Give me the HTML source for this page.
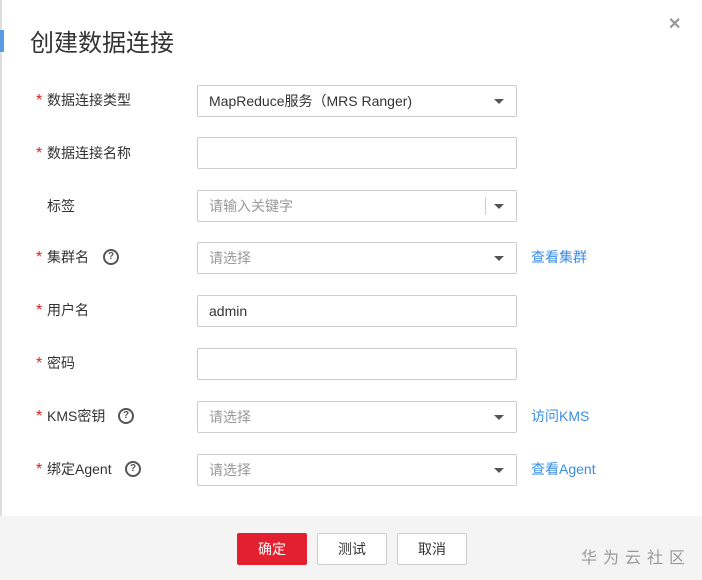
<!DOCTYPE html>
<html><head><meta charset="utf-8"><style>
*{box-sizing:border-box;margin:0;padding:0}
body{width:702px;height:580px;background:#fff;position:relative;overflow:hidden;font-family:"Liberation Sans","Noto Sans CJK SC",sans-serif;color:#333;font-size:14px}
.edge{position:absolute;left:0;top:0;width:2px;height:580px;background:#ddd}
.bar{position:absolute;left:0;top:30px;width:4px;height:22px;background:#5a9be6}
.title{position:absolute;left:30px;top:28px;font-size:24px;color:#333;line-height:32px}
.close{position:absolute;left:668px;top:14px;font-size:16px;font-weight:bold;color:#999}
.lab{position:absolute;left:36px;font-size:14px;color:#333;line-height:20px}
.lab i{color:#e02222;font-style:normal;margin-right:4px;font-size:16px;display:inline-block;width:7px}
.q{position:absolute;top:2px;width:16px;height:16px;border:2px solid #555;border-radius:50%;font-size:10px;font-weight:bold;text-align:center;line-height:12px;color:#555;font-style:normal}
.in{position:absolute;left:197px;width:320px;height:32px;border:1px solid #ccc;border-radius:2px;padding-left:11px;line-height:30px;font-size:14px;color:#333}
.ph{color:#999}
.arr{position:absolute;right:12px;top:13px;width:0;height:0;border-left:5px solid transparent;border-right:5px solid transparent;border-top:5px solid #555}
.sep{position:absolute;right:30px;top:6px;width:1px;height:18px;background:#ccc}
.lk{position:absolute;left:531px;color:#3a8ee6;font-size:14px;line-height:20px}
.foot{position:absolute;left:0;top:516px;width:702px;height:64px;background:#f4f4f4}
.btn{position:absolute;top:533px;width:70px;height:32px;border:1px solid #ccc;border-radius:2px;background:#fff;text-align:center;line-height:30px;font-size:14px;color:#333}
.wm{position:absolute;left:581px;top:544px;font-size:16px;color:#999;letter-spacing:6px}
</style></head><body>
<div class="edge"></div><div class="bar"></div>
<div class="title">创建数据连接</div>
<div class="close">✕</div>

<div class="lab" style="top:90px"><i>*</i>数据连接类型</div>
<div class="in" style="top:85px">MapReduce服务（MRS Ranger)<span class="arr"></span></div>

<div class="lab" style="top:143px"><i>*</i>数据连接名称</div>
<div class="in" style="top:137px"></div>

<div class="lab" style="top:196px;left:47px">标签</div>
<div class="in" style="top:190px"><span class="ph">请输入关键字</span><span class="sep"></span><span class="arr"></span></div>

<div class="lab" style="top:247px"><i>*</i>集群名</div>
<div class="q" style="left:103px;top:249px">?</div>
<div class="in" style="top:242px"><span class="ph">请选择</span><span class="arr"></span></div>
<div class="lk" style="top:247px">查看集群</div>

<div class="lab" style="top:300px"><i>*</i>用户名</div>
<div class="in" style="top:295px">admin</div>

<div class="lab" style="top:353px"><i>*</i>密码</div>
<div class="in" style="top:348px"></div>

<div class="lab" style="top:406px"><i>*</i>KMS密钥</div>
<div class="q" style="left:118px;top:408px">?</div>
<div class="in" style="top:401px"><span class="ph">请选择</span><span class="arr"></span></div>
<div class="lk" style="top:406px">访问KMS</div>

<div class="lab" style="top:459px"><i>*</i>绑定Agent</div>
<div class="q" style="left:125px;top:461px">?</div>
<div class="in" style="top:454px"><span class="ph">请选择</span><span class="arr"></span></div>
<div class="lk" style="top:459px">查看Agent</div>

<div class="foot"></div>
<div class="btn" style="left:237px;background:#e3202f;border-color:#e3202f;color:#fff">确定</div>
<div class="btn" style="left:317px">测试</div>
<div class="btn" style="left:397px">取消</div>
<div class="wm">华为云社区</div>
</body></html>
